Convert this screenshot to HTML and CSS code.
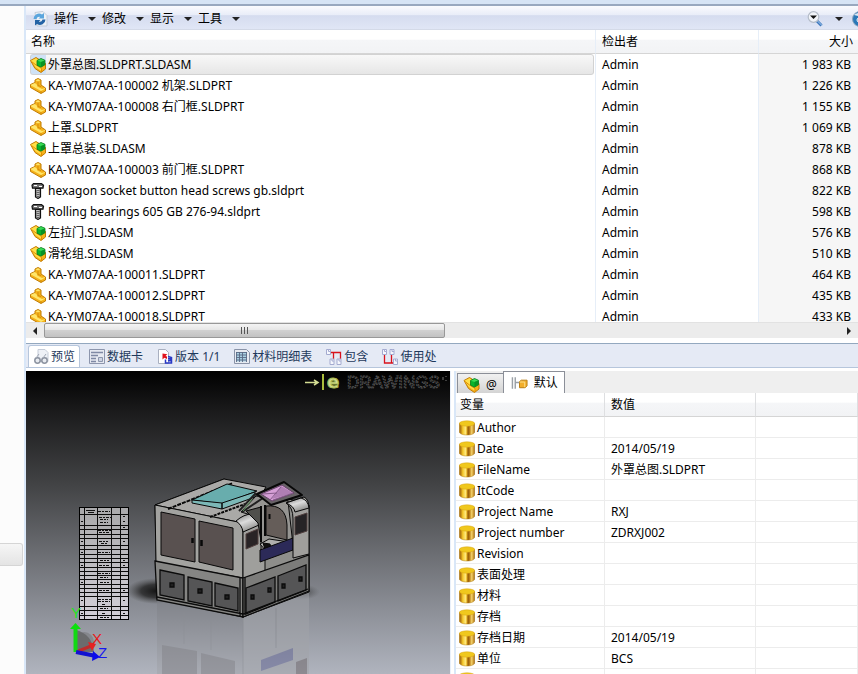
FILE: index.html
```html
<!DOCTYPE html>
<html lang="zh-CN">
<head>
<meta charset="utf-8">
<title>PDM</title>
<link rel="stylesheet" href="styles.css">
</head>
<body>
<svg class="defs" aria-hidden="true">
  <defs>
    <linearGradient id="gold"><stop offset="0" stop-color="#a06a10"/><stop offset=".1" stop-color="#b87e14"/><stop offset=".22" stop-color="#f3c62a"/><stop offset=".4" stop-color="#ffe97a"/><stop offset=".5" stop-color="#e8b020"/><stop offset=".56" stop-color="#8e5607"/><stop offset=".66" stop-color="#b97a14"/><stop offset=".8" stop-color="#f0cf6a"/><stop offset=".9" stop-color="#d9a53a"/><stop offset="1" stop-color="#8a5a10"/></linearGradient>
    <linearGradient id="sky" x2="0" y2="1"><stop offset="0" stop-color="#000"/><stop offset=".14" stop-color="#1c1c1d"/><stop offset=".38" stop-color="#434446"/><stop offset=".6" stop-color="#6b6d72"/><stop offset=".8" stop-color="#8e9199"/><stop offset="1" stop-color="#b0b4be"/></linearGradient>
    <linearGradient id="sheet" x2="0" y2="1"><stop offset="0" stop-color="#a9a9ab"/><stop offset="1" stop-color="#d3d0d8"/></linearGradient>
    <linearGradient id="bend" x2=".5" y2="1"><stop offset="0" stop-color="#777"/><stop offset=".5" stop-color="#dcdcdc"/><stop offset="1" stop-color="#8d8d8b"/></linearGradient>
    <linearGradient id="fade" x2="0" y2="1"><stop offset="0" stop-color="#7c7e84"/><stop offset="1" stop-color="#a3a5ab"/></linearGradient>
    <radialGradient id="shadow"><stop offset="0" stop-color="#151515"/><stop offset=".5" stop-color="#222" stop-opacity=".8"/><stop offset="1" stop-color="#444" stop-opacity="0"/></radialGradient>
  </defs>
  <symbol id="part" viewBox="0 0 16 16">
    <path d="M.5 6.500 5 4.500V2l3-1.500L11 2v5l4.500 3v3L11 15.500.5 9.500z" fill="#f6b21a" stroke="#c07c05"/>
    <path d="M5.500 2.200 8 1.200l2.300 1L8 3.500zM1 6.700 4.800 5 7 6.700v1.500L12 11l3-1v.8L11 13 1 7.500z" fill="#ffe66a"/>
    <path d="M8 3.500v4l3 1M11 13v2" stroke="#d18b08" fill="none"/>
  </symbol>
  <symbol id="asm" viewBox="0 0 16 16">
    <path d="M.5 3.500 6 .5l9.500 6V12l-4.500 3.500-6-4z" fill="#f6b21a" stroke="#c07c05"/>
    <path d="M1 3.800 6 1.200l2 1.500-1 5 4.500 3V14L5.500 10z" fill="#ffe048"/>
    <path d="M1.500 4.500 6 8l5.500 3.500V15" fill="none" stroke="#e58e00"/>
    <path d="M7 3.500 11 1.500l4 1.800v4.400l-4 2.500-4-2z" fill="#08b52b" stroke="#07791c" stroke-width=".8"/>
    <path d="M7.500 3.800 11 2l3.500 1.500L11 5z" fill="#3bd957"/><path d="M11 5v4.800l3.700-2.300V3.700z" fill="#089225"/>
  </symbol>
  <symbol id="screw" viewBox="0 0 16 16">
    <path d="M3.500.7h8l2 1.500-.5 3H2.500l-.5-3z" fill="#777" stroke="#111" stroke-width="1.200"/>
    <path d="M4 2.500h3M9 3.500h3" stroke="#fff"/><path d="M5.500 5.500h5V14l-2.500 1.500L5.500 14z" fill="#ccc" stroke="#111" stroke-width="1.200"/>
    <path d="M6 8l4-1M6 10l4-1M6 12l4-1M6 14l4-1" stroke="#555"/>
  </symbol>
  <symbol id="cyl" viewBox="0 0 16 16">
    <path d="M.3 3.500V12c0 1.500 3 3 7.700 3s7.700-1.500 7.700-3V3.500z" fill="url(#gold)" stroke="#b07c14" stroke-width=".5"/>
    <ellipse cx="8" cy="3.500" rx="7.700" ry="2.700" fill="#f0c81d" stroke="#d9a516" stroke-width=".5"/>
  </symbol>
</svg>

<div class="frame"></div>
<div class="window">
  <aside class="side"><div class="side-grip"></div></aside>
  <main class="main">
    <section class="files">
      <nav class="toolbar">
        <svg class="icon16" viewBox="0 0 16 16"><path d="M3 1.500 11 .5l4 4v10.500H5z" fill="#eef2f7" stroke="#c3ccd8"/><path d="M1.500 8A5.500 5.500 0 0 1 10 3.500L12 2v5.500H6.500L8.200 6A3 3 0 0 0 4.500 8z" fill="#5aa5dd"/><path d="M13.500 8.500A5.500 5.500 0 0 1 5 13l-2 1.500V9h5.500l-1.700 1.500a3 3 0 0 0 3.700-2z" fill="#2463a5"/></svg>
        <button>操作<i></i></button><button>修改<i></i></button><button>显示<i></i></button><button>工具<i></i></button>
        <span class="spacer"></span>
        <button class="search" aria-label="搜索"><svg class="icon16" viewBox="0 0 16 16"><path d="M10 10l4.500 4.500" stroke="#3e78bd" stroke-width="3"/><path d="M10 9.500l5 5" stroke="#a8cdf2"/><circle cx="6.500" cy="6" r="5.300" fill="#f1f4f9" stroke="#b4bcc8" stroke-width="1.200"/><path d="M3 4.500h7L6.500 8z" fill="#111"/></svg><i></i></button>
        <svg class="help" viewBox="0 0 6 16"><circle cx="8" cy="8" r="7.500" fill="#2b78b8" stroke="#8ba5bd"/><path d="M2 4a7 7 0 0 1 4-2v3z" fill="#dce9f4"/><circle cx="7" cy="9" r="2" fill="none" stroke="#fff"/></svg>
      </nav>
      <div class="list">
        <table class="file-table">
          <colgroup><col class="c-name"><col class="c-owner"><col></colgroup>
          <thead><tr><th>名称</th><th>检出者</th><th class="num">大小</th></tr></thead>
          <tbody>
            <tr class="selected"><td><span class="cell"><svg><use href="#asm"/></svg>外罩总图.SLDPRT.SLDASM</span></td><td>Admin</td><td class="num">1 983 KB</td></tr>
            <tr><td><span class="cell"><svg><use href="#part"/></svg>KA-YM07AA-100002 机架.SLDPRT</span></td><td>Admin</td><td class="num">1 226 KB</td></tr>
            <tr><td><span class="cell"><svg><use href="#part"/></svg>KA-YM07AA-100008 右门框.SLDPRT</span></td><td>Admin</td><td class="num">1 155 KB</td></tr>
            <tr><td><span class="cell"><svg><use href="#part"/></svg>上罩.SLDPRT</span></td><td>Admin</td><td class="num">1 069 KB</td></tr>
            <tr><td><span class="cell"><svg><use href="#asm"/></svg>上罩总装.SLDASM</span></td><td>Admin</td><td class="num">878 KB</td></tr>
            <tr><td><span class="cell"><svg><use href="#part"/></svg>KA-YM07AA-100003 前门框.SLDPRT</span></td><td>Admin</td><td class="num">868 KB</td></tr>
            <tr><td><span class="cell"><svg><use href="#screw"/></svg>hexagon socket button head screws gb.sldprt</span></td><td>Admin</td><td class="num">822 KB</td></tr>
            <tr><td><span class="cell"><svg><use href="#screw"/></svg>Rolling bearings 605 GB 276-94.sldprt</span></td><td>Admin</td><td class="num">598 KB</td></tr>
            <tr><td><span class="cell"><svg><use href="#asm"/></svg>左拉门.SLDASM</span></td><td>Admin</td><td class="num">576 KB</td></tr>
            <tr><td><span class="cell"><svg><use href="#asm"/></svg>滑轮组.SLDASM</span></td><td>Admin</td><td class="num">510 KB</td></tr>
            <tr><td><span class="cell"><svg><use href="#part"/></svg>KA-YM07AA-100011.SLDPRT</span></td><td>Admin</td><td class="num">464 KB</td></tr>
            <tr><td><span class="cell"><svg><use href="#part"/></svg>KA-YM07AA-100012.SLDPRT</span></td><td>Admin</td><td class="num">435 KB</td></tr>
            <tr><td><span class="cell"><svg><use href="#part"/></svg>KA-YM07AA-100018.SLDPRT</span></td><td>Admin</td><td class="num">433 KB</td></tr>
          </tbody>
        </table>
      </div>
      <div class="scrollbar"><span class="arrow left"></span><span class="thumb"><b></b><b></b><b></b></span><span class="spacer"></span><span class="arrow right"></span></div>
    </section>
    <section class="detail">
      <nav class="tabs">
        <button class="active"><svg viewBox="0 0 16 16"><path d="M4 .5h7l3 3v9H4z" fill="#eef1f6" stroke="#c5ccd8"/><circle cx="3.500" cy="11.500" r="2.700" fill="#e8ebf0" stroke="#8c93a0" stroke-width="1.500"/><circle cx="10.500" cy="11.500" r="2.700" fill="#e8ebf0" stroke="#8c93a0" stroke-width="1.500"/><path d="M2 9l3-4M9 9l3-4" stroke="#a0a7b4"/></svg>预览</button>
        <button><svg viewBox="0 0 16 16"><path d="M.5.500h15v14H.5z" fill="#e6e9f1" stroke="#8d96ad"/><path d="M2 3.500h12M2 6.500h7M2 9.500h5M2 12.500h5" stroke="#7f89a4" stroke-width="1.500"/><path d="M9.500 8.500h4v4h-4z" fill="#cdd3e2" stroke="#8d96ad"/></svg>数据卡</button>
        <button><svg viewBox="0 0 16 16"><path d="M1.500.5h7l3 3v11h-10z" fill="#fff" stroke="#a9b0c0"/><path d="M5.500 4.500v6l1.800-1.800L10 10V7.500L8.500 7l1.800-1.800z" fill="#e1131c"/><path d="M8.500 10.500V14h6V8.500L11 7.500M11 9.800h2.200v2H11" fill="none" stroke="#2939c5" stroke-width="1.500"/></svg>版本 1/1</button>
        <button><svg viewBox="0 0 16 16"><path d="M.5.500h12l3 3v11H.5z" fill="#e8ebf1" stroke="#8a94a8"/><path d="M2.500 3h10v9.500h-10z" fill="#a9d0e2"/><path d="M2 3.500h11M2 6h11M2 8.500h11M2 11h11M2.500 3v10M5.500 3v10M8.500 3v10M12.500 3v10" stroke="#5a6a85" stroke-width=".9"/></svg>材料明细表</button>
        <button><svg viewBox="0 0 16 16"><path d="M5 3.500h9.500V10M7.500 3.500V10" fill="none" stroke="#d8121c" stroke-width="1.300"/><g fill="#f5f7fd" stroke="#a4abd0"><path d="M.5.500h4v5h-4zM4 10h4v5.500H4zM11 10h4v5.500h-4z"/><path d="M2.500.500v2h2M6 10v2h2M13 10v2h2"/></g></svg>包含</button>
        <button><svg viewBox="0 0 16 16"><path d="M2.500 6v8H12M9.500 6v8" fill="none" stroke="#d8121c" stroke-width="1.300"/><g fill="#f5f7fd" stroke="#a4abd0"><path d="M.5.500h4v5h-4zM8 .500h4v5H8zM11.500 10h4v5.500h-4z"/><path d="M2.500.500v2h2M10 .5v2h2M13.500 10v2h2"/></g></svg>使用处</button>
      </nav>
      <div class="panes">
        <svg class="viewer" viewBox="26 371 424 303" preserveAspectRatio="xMinYMin slice" role="img" aria-label="eDrawings">
          <rect x="26" y="371" width="424" height="303" fill="url(#sky)"/>
          <g>
            <path d="M305 382.500h13M314 380l4 2.500-4 2.500" fill="none" stroke="#d3dc92" stroke-width="1.500"/>
            <path d="M323 374v16" stroke="#a9bd3c" stroke-width="2"/>
            <text x="327" y="388" class="logo-e">e</text>
            <text x="347" y="388" class="logo-word">DRAWINGS</text>
            <path d="M443 377v3M446 376v1M446 380v1" stroke="#777"/>
          </g>
          <ellipse cx="156" cy="591" rx="30" ry="13" fill="url(#shadow)"/>
          <ellipse cx="300" cy="592" rx="20" ry="8" fill="url(#shadow)" opacity=".4"/>
          <!-- floor reflection -->
          <g opacity=".5">
            <path d="M157 600 243 617v57H157z" fill="url(#fade)"/><path d="M243 617 309 592v82h-66z" fill="#a2a4a9"/>
            <path d="M162 645l35 6v23h-35zM201 653l34 8v13h-34z" fill="#7d7c80"/>
            <path d="M261 660l32-12v12l-32 11z" fill="#5f6292"/><path d="M296 662l11-4v16h-11z" fill="#6a6265"/>
            <path d="M184 612v32M211 618v32M243 617v57M276 608v40" stroke="#85878c" fill="none"/>
          </g>
          <!-- machine body -->
          <g stroke="#080808" stroke-width="1" stroke-linejoin="round">
            <path d="M155 505 224 479 309 505V592l-66 25-86-18z" fill="#8e8e8b"/>
            <path d="M155 505 224 479 266 487 245 522 238 522z" fill="#aaa9a7"/>
            <path d="M155 505 238 522q5 3 5 10v46l-87-16z" fill="#a3a3a0"/>
            <path d="M238 522l22-8 5 14v50h-22v-46q0-7-5-10z" fill="#9f9f9c"/>
            <path d="M236 521q8-7 16-7 6 1 7 11l-16 7q-1-7-7-11z" fill="url(#bend)"/>
            <path d="M168 509 233 483" stroke-dasharray="4 1" stroke-width="2"/>
            <path d="M210 517 245 504" stroke-dasharray="3 1" stroke-width="2"/>
            <path d="M192 500 227 484 257 491 223 504z" fill="#68adad"/><path d="M192 500l30 3v6l-30-6zM222 503l33-11v5l-33 12z" fill="#7cb8b7"/>
            <path d="M161 512l34 7v43l-34-7zM199 521l34 7v42l-34-8z" fill="#595150"/>
            <path d="M192.500 538v5M201.500 540v6" stroke-width="2.500"/>
            <path d="M246 534l12-5v15l-12 5z" fill="#292426" stroke="#52403f"/>
            <path d="M241 512 256 496 288 501 293 545 261 558v-40z" fill="#969592"/>
            <path d="M246 511l15-4v34l-3-18z" fill="#50504c"/>
            <path d="M266 506q20-2 21 19v15l-21-5z" fill="#655d59"/><path d="M261 506v36M265 505v31M269.500 514v5" stroke-width="2"/>
            <path d="M260 544l9-5 20 3-22 10z" fill="#b0b0ae"/><path d="M263 543l7 1 1 4-6 1z" fill="#111"/>
            <path d="M260 550 293 538v12l-33 12z" fill="#2c2a58"/>
            <path d="M286 503 304 497q5 2 5 13v44l-16 4v-39q0-12-7-16z" fill="#a09f9c"/>
            <path d="M286 503 301 498q7 2 8 10l-14 4q-1-6-9-9z" fill="url(#bend)"/>
            <path d="M295 517l12-4v18l-12 4z" fill="#262426" stroke="#51403f"/>
            <path d="M239 511 255 494 263 498 242 512" fill="none" stroke="#202020" stroke-width="2"/>
            <path d="M243 511l9-12" stroke="#5a925a"/>
            <path d="M257 494 284 482 302 495 271 505z" fill="#686367" stroke-width="2"/>
            <path d="M261 494 282 485 294 493 272 501z" fill="#d59fd6" stroke="#654368"/>
            <path d="M272 499 281 486l12 7z" fill="#b07fb4" stroke="none"/>
            <path d="M270 500l11-13M273 500l20-7M263 494l14-1" stroke="#875d8c" fill="none"/>
          </g>
          <!-- lower cabinet -->
          <g stroke="#0b0b0b" stroke-width="1.300">
            <path d="M155 561 243 578v39l-86-17z" fill="#858583"/><path d="M243 578 309 555v36l-66 26z" fill="#7c7c7a"/>
            <path d="M160 570l24 5v25l-24-5zM188 577l24 5v24l-24-5zM215 583l23 5v23l-23-5zM246 588l29-11v25l-29 12zM278 576l28-11v25l-28 11z" fill="#555556"/>
            <path d="M157 597l86 17 65-25M240 578v38M245 577v38" fill="none"/>
            <path d="M170 583h4v4h-4zM198 589h4v4h-4zM225 595h4v4h-4zM251 595h3v4h-3zM268 588h3v4h-3zM282 584h3v4h-3zM299 577h3v4h-3z" fill="#202020"/>
          </g>
          <!-- bill of materials sheet -->
          <rect x="79.500" y="507.500" width="49" height="112" fill="url(#sheet)" stroke="#000"/>
          <path d="M80 514.500h48M80 525.500h48M80 529.500h48M80 534.500h48M80 538.500h48M80 545.500h48M80 549.500h48M80 554.500h48M80 558.500h48M80 562.500h48M80 567.500h48M80 571.500h48M80 575.500h48M80 579.500h48M80 584.500h48M80 588.500h48M80 592.500h48M80 596.500h48M80 606.500h48M80 610.500h48M80 615.500h48M84.500 508v111M97.500 508v111M111.500 508v111M120.500 508v111" stroke="#0b0b0b"/>
          <path d="M98 511.500h12M99 517.500h12M100 519.500h8M100 522.500h8M98 530.500h13M99 532.500h10M99 541.500h9M101 543.500h6M98 552.500h12M100 560.500h9M99 565.500h11M98 573.500h12M100 577.500h8M100 582.500h9M99 590.500h11M98 599.500h13M98 601.500h12M102 604.500h3M100 608.500h8M102 613.500h4M100 617.500h9" stroke="#111" stroke-dasharray="3 1 2 1"/>
          <path d="M81 521.500h2M123 516.500h2M123 521.500h2M123 527.500h2M81 541.500h2M123 541.500h2M81 552.500h2M123 560.500h2M81 565.500h2M123 565.500h2M81 582.500h2M123 590.500h2M81 600.500h2M123 600.500h2M81 613.500h2M123 613.500h2M86 510.500h9M88 512.500h6" stroke="#111"/>
          <!-- axis triad -->
          <path d="M76 652V630q16 4 18 22z" fill="#555a"/><circle cx="84" cy="642" r="10" fill="#6666"/>
          <path d="M76 652l15-6" stroke="#bf2c2c" stroke-width="3"/><path d="M88 642l8 2-4 7z" fill="#e42323"/>
          <path d="M75.500 652v-24" stroke="#12d912" stroke-width="4"/><path d="M70 629l5.500-6 5.500 6z" fill="#0ce20c"/>
          <path d="M76 652l20 4" stroke="#1212d0" stroke-width="4"/><path d="M93 651l7 6-8 4z" fill="#0b0bea"/>
          <text x="71" y="618" class="axis y">Y</text><text x="92" y="644" class="axis x">X</text><text x="98" y="658" class="axis z">Z</text>
        </svg>
        <div class="splitter"></div>
        <section class="props">
          <nav class="config-tabs">
            <button><svg><use href="#asm"/></svg>@</button>
            <button class="active"><svg viewBox="0 0 18 16"><path d="M1.500 2v12M4.500 2v12M4 7.500h5" stroke="#9aa0a6" stroke-width="1.500"/><path d="M9 6.500l2-1.500h6v6l-2 2H9z" fill="#f3ae2a" stroke="#b57a10"/><path d="M9 7h5.500v5.500" fill="none" stroke="#fbe08c"/></svg>默认</button>
          </nav>
          <table class="prop-table">
            <colgroup><col class="c-var"><col class="c-val"><col></colgroup>
            <thead><tr><th>变量</th><th>数值</th><th></th></tr></thead>
            <tbody>
              <tr><td><span class="cell"><svg><use href="#cyl"/></svg>Author</span></td><td></td><td></td></tr>
              <tr><td><span class="cell"><svg><use href="#cyl"/></svg>Date</span></td><td>2014/05/19</td><td></td></tr>
              <tr><td><span class="cell"><svg><use href="#cyl"/></svg>FileName</span></td><td>外罩总图.SLDPRT</td><td></td></tr>
              <tr><td><span class="cell"><svg><use href="#cyl"/></svg>ItCode</span></td><td></td><td></td></tr>
              <tr><td><span class="cell"><svg><use href="#cyl"/></svg>Project Name</span></td><td>RXJ</td><td></td></tr>
              <tr><td><span class="cell"><svg><use href="#cyl"/></svg>Project number</span></td><td>ZDRXJ002</td><td></td></tr>
              <tr><td><span class="cell"><svg><use href="#cyl"/></svg>Revision</span></td><td></td><td></td></tr>
              <tr><td><span class="cell"><svg><use href="#cyl"/></svg>表面处理</span></td><td></td><td></td></tr>
              <tr><td><span class="cell"><svg><use href="#cyl"/></svg>材料</span></td><td></td><td></td></tr>
              <tr><td><span class="cell"><svg><use href="#cyl"/></svg>存档</span></td><td></td><td></td></tr>
              <tr><td><span class="cell"><svg><use href="#cyl"/></svg>存档日期</span></td><td>2014/05/19</td><td></td></tr>
              <tr><td><span class="cell"><svg><use href="#cyl"/></svg>单位</span></td><td>BCS</td><td></td></tr>
              <tr><td><span class="cell"><svg><use href="#cyl"/></svg></span></td><td></td><td></td></tr>
            </tbody>
          </table>
        </section>
      </div>
    </section>
  </main>
</div>
</body>
</html>
```
FILE: styles.css
```css
* { box-sizing: border-box; }
body {
  margin: 0;
  height: 100vh;
  display: flex;
  flex-direction: column;
  overflow: hidden;
  background: #fff;
  color: #000;
  font: 12px/20px "Noto Sans", "Noto Sans CJK SC", sans-serif;
}
button { border: 0; padding: 0; background: none; color: inherit; font: inherit; display: flex; align-items: center; white-space: nowrap; }
svg { flex: none; display: block; }
.defs { position: absolute; width: 0; height: 0; }
.spacer { flex: 1; }
.icon16 { width: 16px; height: 16px; }

.frame { flex: none; height: 6px; background: #d6e4f5; border-bottom: 2px solid #98a8bf; }
.window { flex: 1; min-height: 0; display: flex; }
.side { flex: none; width: 26px; display: flex; flex-direction: column; background: #fcfcfc; border-right: 2px solid #d9e7f8; }
.side-grip { margin-top: auto; margin-bottom: 108px; width: 23px; height: 23px; background: linear-gradient(#f6f6f6, #e4e4e4); border: 1px solid #d5d5d5; border-left: 0; border-radius: 0 3px 3px 0; }
.main { flex: 1; min-width: 0; display: flex; flex-direction: column; }
.files { flex: 337 1 0; min-height: 0; display: flex; flex-direction: column; }
.detail { flex: 331 1 0; min-height: 0; display: flex; flex-direction: column; }

.toolbar { flex: none; height: 24px; display: flex; align-items: center; padding: 2px 0 0 6px; background: linear-gradient(#fafbfe 0, #e9edf8 38%, #d5dcef 42%, #e0e6f6 100%); border-bottom: 1px solid #d4dae8; }
.toolbar button { margin-left: 6px; }
.toolbar i { margin-left: 10px; border: 4px solid transparent; border-top-color: #222; border-bottom: 0; }
.toolbar .search i { margin-left: 12px; }
.help { width: 6px; height: 16px; margin-left: 9px; }

.list { flex: 1; min-height: 0; overflow: hidden; }
table { width: 100%; border-collapse: separate; border-spacing: 0; table-layout: fixed; }
th, td { padding: 0 6px; height: 21px; line-height: 20px; text-align: left; font-weight: normal; white-space: nowrap; }
th { height: 24px; padding-top: 1px; background: linear-gradient(#fff 40%, #f5f6f8 44%, #f2f3f5); border-bottom: 1px solid #d5d5d5; }
.c-name { width: 569px; }
.c-owner { width: 163px; }
.file-table th, .file-table td { border-left: 1px solid #e6eef8; }
.file-table th:first-child, .file-table td:first-child { border-left: 0; }
.file-table td:first-child { padding: 0 1px 0 4px; }
.file-table .num { text-align: right; padding-right: 7px; }
.file-table td.num { background: #f6f6f6; }
.file-table th.num { padding-right: 5px; }
.file-table th:first-child { padding-left: 5px; }
.cell { display: flex; align-items: center; gap: 2px; height: 21px; }
.cell svg { width: 16px; height: 16px; }
.selected .cell { background: linear-gradient(90deg, #cfe2f6 0, #cfe2f6 16px, transparent 16px), linear-gradient(#f9f9f9, #e5e5e5); box-shadow: inset 0 0 0 1px #d2d2d2; border-radius: 3px; }

.scrollbar { flex: none; height: 16px; margin-bottom: 5px; display: flex; align-items: center; background: #ececec; border-top: 1px solid #e2e2e2; }
.arrow { width: 18px; display: flex; justify-content: center; }
.arrow::before { content: ""; border: 4px solid transparent; }
.left::before { border-right-color: #222; border-left: 0; }
.right::before { border-left-color: #222; border-right: 0; }
.thumb { width: 401px; height: 15px; display: flex; align-items: center; justify-content: center; gap: 2px; border: 1px solid #989898; border-radius: 2px; background: linear-gradient(#f4f4f4 0, #e6e6e6 45%, #d0d0d0 50%, #c2c2c2 100%); }
.thumb b { width: 1px; height: 7px; background: #555; }

.tabs { flex: none; height: 25px; display: flex; align-items: flex-end; gap: 8px; padding-left: 2px; background: #e5eaf5; border-top: 1px solid #93a8bf; border-bottom: 1px solid #b6c6dc; color: #1e395b; }
.tabs button { height: 22px; padding: 2px 5px 0 1px; gap: 2px; }
.tabs svg { width: 16px; height: 16px; }
.tabs .active { padding: 1px 4px 0 5px; gap: 1px; background: #fff; border: 1px solid #b6c6dc; border-bottom: 0; border-radius: 3px 3px 0 0; }
.panes { flex: 1; min-height: 0; display: flex; padding-top: 3px; }
.viewer { flex: 424 1 0; min-width: 0; height: 100%; }
.logo-e { font: bold 18px "DejaVu Sans", sans-serif; fill: #d2db91; stroke: #a9ba50; }
.logo-word { font: 17px "Liberation Sans", sans-serif; fill: #0a0a0a; stroke: #555; stroke-width: 1; stroke-dasharray: 2 1; }
.axis { font: 15px "Liberation Sans", sans-serif; }
.y { fill: #1ce61c; }
.x { fill: #e81818; }
.z { fill: #1717ee; }
.splitter { flex: none; width: 6px; border-left: 1px solid #e9f0fa; border-right: 2px solid #d9e7f8; }
.props { flex: 402 1 0; min-width: 0; overflow: hidden; }
.config-tabs { display: flex; align-items: flex-end; height: 22px; padding-left: 1px; background: #efefef; }
.config-tabs button { height: 20px; padding: 2px 6px 0 5px; gap: 6px; background: linear-gradient(#f1f1f1, #d4d4d4); border: 1px solid #8b8f98; border-bottom: 0; border-right: 0; }
.config-tabs svg { width: 17px; height: 16px; }
.config-tabs .active { height: 22px; padding: 0 6px 0 7px; background: #fff; border-right: 1px solid #8b8f98; }
.c-var { width: 149px; }
.c-val { width: 151px; }
.prop-table th { border-right: 1px solid #dedfe1; }
.prop-table td { padding-top: 2px; line-height: 18px; border-right: 1px solid #ececec; border-bottom: 1px solid #ececec; }
.prop-table th:first-child { padding-left: 4px; }
.prop-table td:first-child { padding-left: 3px; }
.prop-table .cell { height: 18px; }
```
